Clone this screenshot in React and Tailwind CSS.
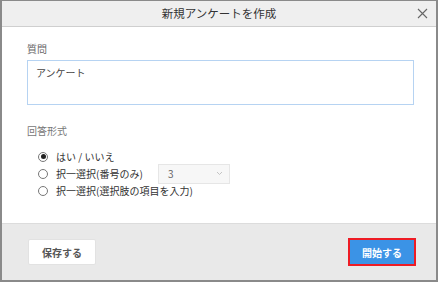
import React from 'react';

const jp = { fontFamily: '"Noto Sans CJK JP", "Noto Sans", sans-serif' };

// ラジオボタン
const Radio = ({ checked }) => (
    <span className="w-[10px] h-[10px] rounded-full border border-[#777] bg-white flex items-center justify-center shrink-0">
        {checked && <span className="w-[5px] h-[5px] rounded-full bg-[#222]" />}
    </span>
);

const App = () => {
    return (
        <div className="w-[439px] h-[283px] bg-white" style={jp}>
            <div className="w-[438px] h-[282px] border-t border-x-2 border-b-2 border-[#8a8a8a] flex flex-col">
                {/* ヘッダー */}
                <div className="h-[26px] bg-[#efefef] border-b border-[#cfcfcf] flex items-center relative">
                    <div className="flex-1 text-center text-[11.5px] text-[#333] leading-none">新規アンケートを作成</div>
                    <svg className="absolute right-[8px] top-[7px]" width="11" height="11" viewBox="0 0 11 11">
                        <path d="M1 1 L10 10 M10 1 L1 10" stroke="#666" strokeWidth="1.1" />
                    </svg>
                </div>

                {/* 本文 */}
                <div className="flex-1 bg-white pl-[25px] pr-[22px] pt-[17px]">
                    <div className="text-[10px] text-[#666] leading-none">質問</div>
                    <div className="mt-[6px] h-[45px] border border-[#b6d3f2] px-[8px] pt-[7px] text-[10px] text-[#444] leading-none">
                        アンケート
                    </div>
                    <div className="mt-[21px] text-[10px] text-[#777] leading-none">回答形式</div>
                    <div className="mt-[13px] pl-[11px] flex flex-col gap-[2px]">
                        <label className="flex items-center gap-[8px] h-[15px] text-[10px] text-[#333]">
                            <Radio checked />
                            <span>はい / いいえ</span>
                        </label>
                        <label className="flex items-center gap-[8px] h-[15px] text-[10px] text-[#333]">
                            <Radio />
                            <span className="w-[94px]">択一選択(番号のみ)</span>
                            <span className="w-[72px] h-[20px] border border-[#e6e6e6] bg-[#f7f7f7] flex items-center justify-between pl-[9px] pr-[6px] text-[#666]">
                                3
                                <svg width="7" height="5" viewBox="0 0 7 5">
                                    <path d="M1 1 L3.5 3.5 L6 1" stroke="#c4c4c4" fill="none" strokeWidth="1" />
                                </svg>
                            </span>
                        </label>
                        <label className="flex items-center gap-[8px] h-[15px] text-[10px] text-[#333]">
                            <Radio />
                            <span>択一選択(選択肢の項目を入力)</span>
                        </label>
                    </div>
                </div>

                {/* フッター */}
                <div className="h-[57px] bg-[#e9e9e9] border-t border-[#dcdcdc] flex items-center justify-between pl-[26px] pr-[20px]">
                    <button className="w-[68px] h-[26px] bg-white border border-[#e2e2e2] rounded-[2px] text-[10px] font-bold text-[#555]">
                        保存する
                    </button>
                    <button className="w-[68px] h-[28px] bg-[#3b93e6] border-2 border-[#ee1c25] text-[10px] font-bold text-white">
                        開始する
                    </button>
                </div>
            </div>
        </div>
    );
};

export default App;
